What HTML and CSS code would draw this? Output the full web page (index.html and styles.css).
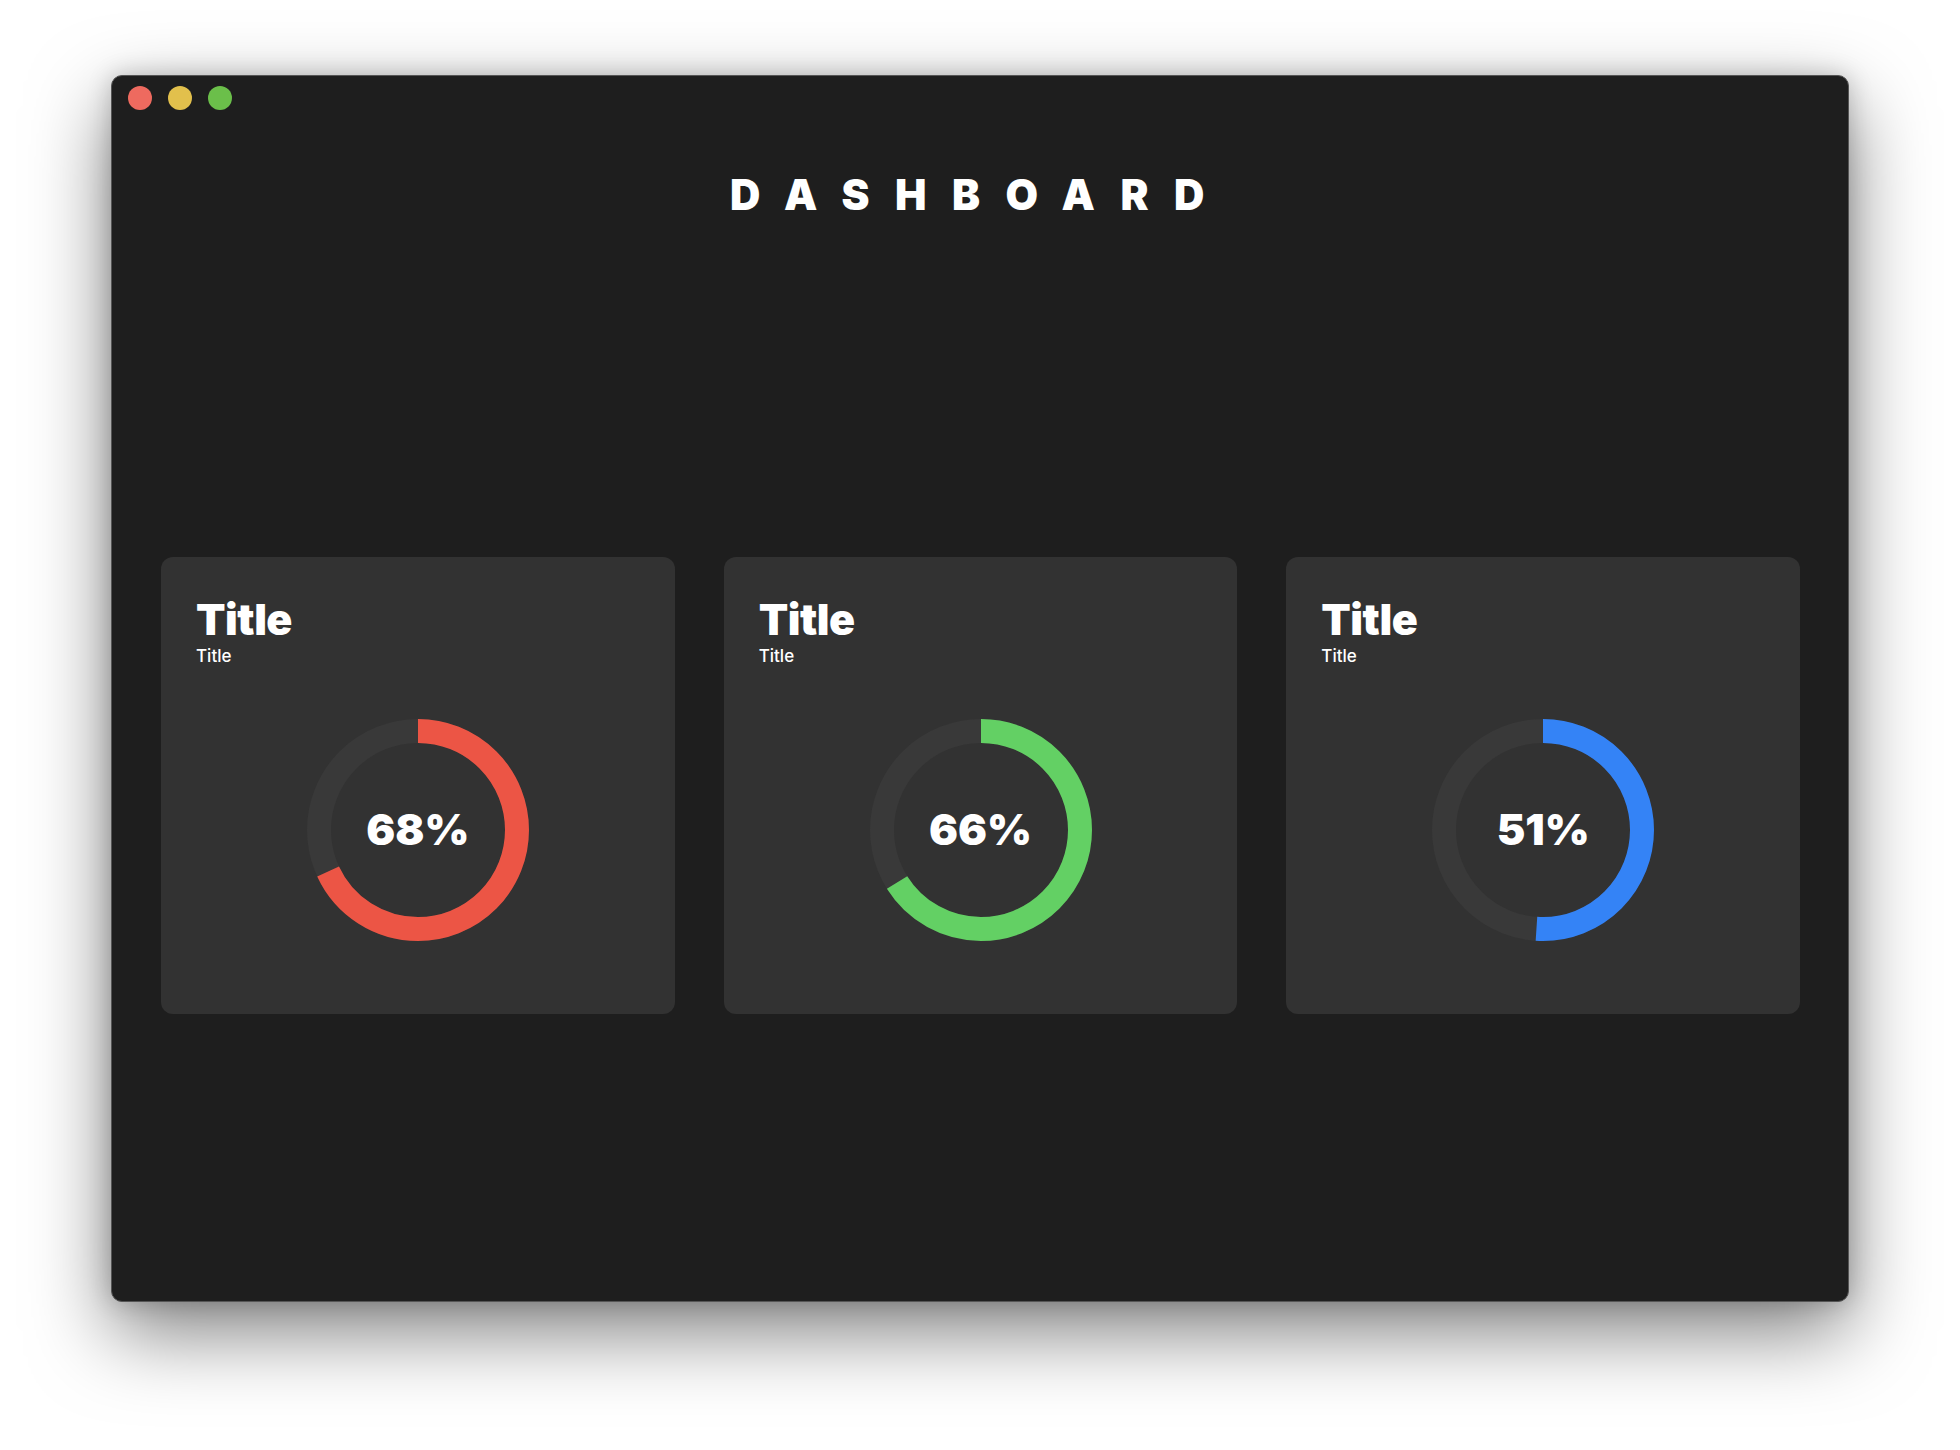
FILE: index.html
```html
<!DOCTYPE html>
<html lang="en">
<head>
<meta charset="utf-8">
<title>Dashboard</title>
<link rel="stylesheet" href="styles.css">
</head>
<body>
<div class="window">
  <div class="titlebar">
    <span class="light red"></span>
    <span class="light yellow"></span>
    <span class="light green"></span>
  </div>
  <h1 class="heading">DASHBOARD</h1>
  <main class="cards">
    <section class="card">
      <h2 class="card-title">Title</h2>
      <p class="card-sub">Title</p>
      <div class="donut">
        <svg class="ring" width="222" height="222" viewBox="0 0 222 222">
          <circle class="track" cx="111" cy="111" r="99"></circle>
          <circle class="bar bar-red" cx="111" cy="111" r="99" style="stroke-dasharray: 423 622.04"></circle>
        </svg>
        <span class="value">68%</span>
      </div>
    </section>
    <section class="card">
      <h2 class="card-title">Title</h2>
      <p class="card-sub">Title</p>
      <div class="donut">
        <svg class="ring" width="222" height="222" viewBox="0 0 222 222">
          <circle class="track" cx="111" cy="111" r="99"></circle>
          <circle class="bar bar-green" cx="111" cy="111" r="99" style="stroke-dasharray: 410.5 622.04"></circle>
        </svg>
        <span class="value">66%</span>
      </div>
    </section>
    <section class="card">
      <h2 class="card-title">Title</h2>
      <p class="card-sub">Title</p>
      <div class="donut">
        <svg class="ring" width="222" height="222" viewBox="0 0 222 222">
          <circle class="track" cx="111" cy="111" r="99"></circle>
          <circle class="bar bar-blue" cx="111" cy="111" r="99" style="stroke-dasharray: 317.2 622.04"></circle>
        </svg>
        <span class="value">51%</span>
      </div>
    </section>
  </main>
</div>
</body>
</html>
```

FILE: styles.css
```css
* {
  box-sizing: border-box;
}

html, body {
  margin: 0;
  padding: 0;
  background: #ffffff;
}

body {
  min-height: 1450px;
  padding: 75px 111px 148px 111px;
  font-family: Inter, "Noto Sans", "Liberation Sans", sans-serif;
  color: #ffffff;
}

.window {
  width: 1738px;
  height: 1227px;
  background: #1e1e1e;
  border: 1px solid #555555;
  border-radius: 11px;
  box-shadow: 0 30px 80px rgba(0, 0, 0, 0.5), 0 0 24px rgba(0, 0, 0, 0.2);
  display: flex;
  flex-direction: column;
  overflow: hidden;
}

.titlebar {
  height: 44px;
  display: flex;
  align-items: center;
  gap: 16px;
  padding-left: 16px;
  flex: none;
}

.light {
  width: 24px;
  height: 24px;
  border-radius: 50%;
  display: block;
}

.red { background: #ee6a5f; }
.yellow { background: #e2c04c; }
.green { background: #6bbf4a; }

.heading {
  margin: 54px 0 53px 0;
  font-size: 42px;
  line-height: 1;
  font-weight: 900;
  letter-spacing: 25.5px;
  text-align: center;
  flex: none;
}

.cards {
  flex: 1;
  display: flex;
  align-items: center;
  gap: 49px;
  padding: 0 48px 0 49px;
}

.card {
  flex: 1;
  background: #323232;
  border-radius: 12px;
  padding: 41px 35px 73px 35px;
  display: flex;
  flex-direction: column;
}

.card-title {
  margin: 0;
  font-size: 43px;
  line-height: 1;
  font-weight: 900;
  letter-spacing: -0.5px;
}

.card-sub {
  margin: 6px 0 0 0;
  font-size: 17px;
  font-weight: 500;
  line-height: 19px;
}

.donut {
  position: relative;
  align-self: center;
  width: 222px;
  height: 222px;
  margin-top: 53px;
}

.ring {
  display: block;
  transform: rotate(-90deg);
}

.track {
  fill: none;
  stroke: #393939;
  stroke-width: 24;
}

.bar {
  fill: none;
  stroke-width: 24;
  stroke-linecap: butt;
}

.bar-red { stroke: #ec5545; }
.bar-green { stroke: #63d064; }
.bar-blue { stroke: #3483f6; }

.value {
  position: absolute;
  inset: 0;
  display: flex;
  align-items: center;
  justify-content: center;
  font-size: 43px;
  font-weight: 900;
  line-height: 1;
}
```
